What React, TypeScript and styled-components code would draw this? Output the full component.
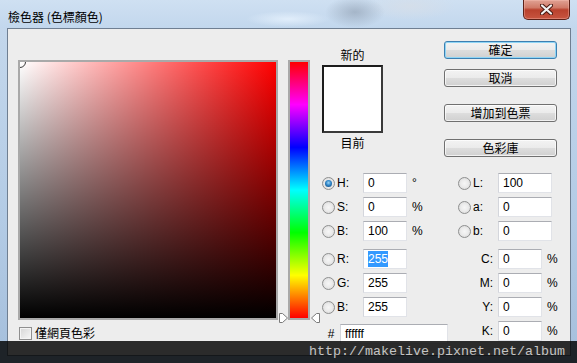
import React from 'react';
import styled, { createGlobalStyle } from 'styled-components';

const cjk = `"Noto Sans CJK TC", "Liberation Sans", sans-serif`;
const latin = `"Liberation Sans", "Noto Sans CJK TC", sans-serif`;

const GlobalStyle = createGlobalStyle`
  html, body { margin: 0; padding: 0; background: #1b1b1b; }
  body { width: 577px; height: 363px; overflow: hidden; font-family: ${latin}; }
`;

const Window = styled.div`
  position: relative;
  width: 577px;
  height: 363px;
  display: flex;
  flex-direction: column;
  overflow: hidden;
  background: linear-gradient(to bottom, #c6d9ed 0%, #b3cbe5 60%, #a5bfdc 100%);
`;

const TitleBar = styled.div`
  height: 28px;
  flex: none;
  display: flex;
  align-items: flex-start;
  padding-left: 8px;
  background:
    radial-gradient(ellipse 42px 8px at 288px 19px, rgba(228, 240, 252, 0.9), rgba(228, 240, 252, 0) 100%),
    radial-gradient(ellipse 30px 16px at 355px 12px, rgba(120, 134, 152, 0.45), rgba(120, 134, 152, 0) 100%),
    radial-gradient(ellipse 45px 14px at 410px 6px, rgba(214, 222, 232, 0.8), rgba(214, 222, 232, 0) 100%),
    linear-gradient(to bottom, #cfe0f2 0%, #c2d7ed 100%);
`;

const Title = styled.div`
  margin-top: 9px;
  font-family: ${cjk};
  font-size: 12px;
  line-height: 16px;
  color: #000;
`;

const CloseButton = styled.div`
  margin-left: auto;
  margin-right: 7px;
  width: 47px;
  height: 20px;
  box-sizing: border-box;
  border: 1px solid #5c2118;
  border-top: none;
  border-radius: 0 0 5px 5px;
  background: linear-gradient(to bottom, #e0a294 0%, #d07a68 40%, #b9412d 52%, #c85540 100%);
  box-shadow: inset 0 0 0 1px rgba(255, 200, 190, 0.35);
  display: flex;
  align-items: center;
  justify-content: center;
`;

const Client = styled.div`
  flex: 1;
  margin: 0 6px 7px 7px;
  border: 1px solid #6f7f92;
  background: #ededed;
  display: flex;
  padding-left: 10px;
`;

const LeftColumn = styled.div`
  padding-top: 31px;
  display: flex;
  flex-direction: column;
`;

const ColorField = styled.div`
  position: relative;
  width: 260px;
  height: 260px;
  box-sizing: border-box;
  border: 2px solid #a9a9a9;
  overflow: hidden;
  background:
    linear-gradient(to bottom, rgba(0, 0, 0, 0) 0%, #000 100%),
    linear-gradient(to right, #fff 0%, #f00 100%);
`;

const FieldMarker = styled.div`
  position: absolute;
  left: -6px;
  top: -6px;
  width: 12px;
  height: 12px;
  box-sizing: border-box;
  border-radius: 50%;
  border: 1.5px solid #3a3a3a;
`;

const WebOnly = styled.label`
  margin-top: 6px;
  margin-left: 1px;
  display: flex;
  align-items: center;
  gap: 3px;
  font-family: ${cjk};
  font-size: 12px;
  line-height: 14px;
  color: #000;
`;

const CheckBox = styled.span`
  width: 13px;
  height: 13px;
  box-sizing: border-box;
  border: 1px solid #8f8f8f;
  background: linear-gradient(135deg, #d6d6d6 0%, #f7f7f7 100%);
  box-shadow: inset 0 0 0 1px #f4f4f4;
`;

const HueColumn = styled.div`
  margin-left: 10px;
  padding-top: 31px;
`;

const HueSlider = styled.div`
  position: relative;
  width: 22px;
  height: 260px;
  box-sizing: border-box;
  border: 2px solid #a9a9a9;
  background: linear-gradient(
    to bottom,
    #f00 0%,
    #f0f 16.67%,
    #00f 33.33%,
    #0ff 50%,
    #0f0 66.67%,
    #ff0 83.33%,
    #f00 100%
  );
`;

const Arrow = styled.svg<{ $side: 'left' | 'right' }>`
  position: absolute;
  top: 251px;
  left: ${(p) => (p.$side === 'left' ? '-11px' : '21px')};
  width: 9px;
  height: 10px;
`;

const RightArea = styled.div`
  margin-left: 12px;
  display: flex;
  flex-direction: column;
`;

const TopSection = styled.div`
  height: 142px;
  display: flex;
`;

const SwatchColumn = styled.div`
  width: 61px;
  padding-top: 18px;
  display: flex;
  flex-direction: column;
  align-items: center;
`;

const SwatchLabel = styled.div`
  font-family: ${cjk};
  font-size: 12px;
  line-height: 16px;
  color: #000;
`;

const Swatch = styled.div<{ $pos: 'top' | 'bottom' }>`
  width: 61px;
  height: 68px;
  box-sizing: border-box;
  border: 2px solid #1c1c1c;
  border-right-color: #3a3a3a;
  border-bottom-color: #3a3a3a;
  background: #fff;
  margin: ${(p) => (p.$pos === 'top' ? '2px 0 2px' : '0')};
`;

const ButtonColumn = styled.div`
  margin-left: 61px;
  padding-top: 12px;
  display: flex;
  flex-direction: column;
`;

const Button = styled.div<{ $gap: number; $default?: boolean }>`
  margin-top: ${(p) => p.$gap}px;
  width: 113px;
  height: 18px;
  box-sizing: border-box;
  border: 1px solid ${(p) => (p.$default ? '#3c7fb1' : '#707070')};
  border-radius: 3px;
  background: linear-gradient(to bottom, #f3f3f3 0%, #ebebeb 48%, #dddddd 52%, #d0d0d0 100%);
  box-shadow: inset 0 0 0 1px ${(p) => (p.$default ? '#8fd5f5' : 'rgba(255,255,255,0.7)')};
  display: flex;
  align-items: center;
  justify-content: center;
  font-family: ${cjk};
  font-size: 12px;
  line-height: 14px;
  color: #000;
`;

const Fields = styled.div`
  display: flex;
  flex-direction: column;
`;

const Row = styled.div<{ $gap?: number }>`
  display: flex;
  align-items: center;
  height: 24px;
  margin-top: ${(p) => p.$gap ?? 0}px;
`;

const Option = styled.label<{ $w: number }>`
  width: ${(p) => p.$w}px;
  display: flex;
  align-items: center;
  gap: 2px;
  font-family: ${latin};
  font-size: 12px;
  color: #000;
`;

const Radio = styled.span<{ $on?: boolean }>`
  position: relative;
  width: 13px;
  height: 13px;
  box-sizing: border-box;
  border-radius: 50%;
  border: 1px solid #8e8f8f;
  background: radial-gradient(circle at 50% 50%, #f6f6f6 0%, #ececec 45%, #d2d2d2 100%);
  &::after {
    content: '';
    display: ${(p) => (p.$on ? 'block' : 'none')};
    position: absolute;
    left: 2px;
    top: 2px;
    width: 7px;
    height: 7px;
    border-radius: 50%;
    background: radial-gradient(circle at 50% 40%, #9ad4f6 0%, #2f86c8 45%, #0d3f72 100%);
  }
`;

const Field = styled.div<{ $w: number; $shift?: number }>`
  width: ${(p) => p.$w}px;
  height: 20px;
  margin-top: ${(p) => p.$shift ?? 0}px;
  box-sizing: border-box;
  border: 1px solid #e1e3e8;
  border-top-color: #abadb3;
  border-left-color: #d4d6dc;
  background: #fff;
  padding-left: 4px;
  font-family: ${latin};
  font-size: 12px;
  line-height: 18px;
  color: #000;
  white-space: nowrap;
  overflow: hidden;
`;

const Selected = styled.span`
  background: #3399ff;
  color: #fff;
  padding: 1px 0;
`;

const Unit = styled.div<{ $w: number }>`
  width: ${(p) => p.$w}px;
  box-sizing: border-box;
  padding-left: 5px;
  font-family: ${latin};
  font-size: 12px;
  color: #000;
`;

const SideKey = styled.div<{ $w: number }>`
  width: ${(p) => p.$w}px;
  box-sizing: border-box;
  padding-right: 5px;
  text-align: right;
  font-family: ${latin};
  font-size: 12px;
  color: #000;
`;

const Hash = styled.div`
  width: 18px;
  text-align: center;
  font-family: ${latin};
  font-size: 12px;
  margin-top: 5px;
  color: #000;
`;

const Watermark = styled.div`
  position: absolute;
  left: 0;
  right: 0;
  bottom: 0;
  height: 22px;
  background: rgba(0, 0, 0, 0.82);
  box-sizing: border-box;
  padding-right: 12px;
  text-align: right;
  font-family: "Liberation Mono", "DejaVu Sans Mono", monospace;
  font-size: 13.33px;
  line-height: 22px;
  color: #c4c4c4;
`;

const hsb = [
  { k: 'H:', v: '0', u: '°', on: true, k2: 'L:', v2: '100' },
  { k: 'S:', v: '0', u: '%', on: false, k2: 'a:', v2: '0' },
  { k: 'B:', v: '100', u: '%', on: false, k2: 'b:', v2: '0' },
];

const rgb = [
  { k: 'R:', v: '255', sel: true, c: 'C:' },
  { k: 'G:', v: '255', sel: false, c: 'M:' },
  { k: 'B:', v: '255', sel: false, c: 'Y:' },
];

export default function App() {
  return (
    <>
      <GlobalStyle />
      <Window>
        <TitleBar>
          <Title>檢色器 (色標顏色)</Title>
          <CloseButton>
            <svg width="13" height="11" viewBox="0 0 13 11">
              <path d="M2 1.5 L11 9.5 M11 1.5 L2 9.5" stroke="#4b1a12" strokeWidth="4.2" strokeLinecap="round" />
              <path d="M2 1.5 L11 9.5 M11 1.5 L2 9.5" stroke="#f2f2f2" strokeWidth="2.2" strokeLinecap="round" />
            </svg>
          </CloseButton>
        </TitleBar>
        <Client>
          <LeftColumn>
            <ColorField>
              <FieldMarker />
            </ColorField>
            <WebOnly>
              <CheckBox />
              僅網頁色彩
            </WebOnly>
          </LeftColumn>
          <HueColumn>
            <HueSlider>
              <Arrow $side="left" viewBox="0 0 9 10">
                <path d="M0.5 0.5 H3.5 L8.5 5 L3.5 9.5 H0.5 Z" fill="#fff" stroke="#7a7a7a" />
              </Arrow>
              <Arrow $side="right" viewBox="0 0 9 10">
                <path d="M8.5 0.5 H5.5 L0.5 5 L5.5 9.5 H8.5 Z" fill="#fff" stroke="#7a7a7a" />
              </Arrow>
            </HueSlider>
          </HueColumn>
          <RightArea>
            <TopSection>
              <SwatchColumn>
                <SwatchLabel>新的</SwatchLabel>
                <Swatch $pos="top" />
                <SwatchLabel>目前</SwatchLabel>
              </SwatchColumn>
              <ButtonColumn>
                <Button $gap={0} $default>確定</Button>
                <Button $gap={10}>取消</Button>
                <Button $gap={17}>增加到色票</Button>
                <Button $gap={17}>色彩庫</Button>
              </ButtonColumn>
            </TopSection>
            <Fields>
              {hsb.map((r) => (
                <Row key={r.k}>
                  <Option $w={41}>
                    <Radio $on={r.on} />
                    {r.k}
                  </Option>
                  <Field $w={44}>{r.v}</Field>
                  <Unit $w={51}>{r.u}</Unit>
                  <Option $w={40}>
                    <Radio />
                    {r.k2}
                  </Option>
                  <Field $w={54}>{r.v2}</Field>
                </Row>
              ))}
              {rgb.map((r, i) => (
                <Row key={r.c} $gap={i === 0 ? 4 : 0}>
                  <Option $w={41}>
                    <Radio />
                    {r.k}
                  </Option>
                  <Field $w={44}>{r.sel ? <Selected>{r.v}</Selected> : r.v}</Field>
                  <SideKey $w={91}>{r.c}</SideKey>
                  <Field $w={44}>0</Field>
                  <Unit $w={20}>%</Unit>
                </Row>
              ))}
              <Row>
                <Hash>#</Hash>
                <Field $w={108} $shift={6}>ffffff</Field>
                <SideKey $w={50}>K:</SideKey>
                <Field $w={44}>0</Field>
                <Unit $w={20}>%</Unit>
              </Row>
            </Fields>
          </RightArea>
        </Client>
        <Watermark>http://makelive.pixnet.net/album</Watermark>
      </Window>
    </>
  );
}
